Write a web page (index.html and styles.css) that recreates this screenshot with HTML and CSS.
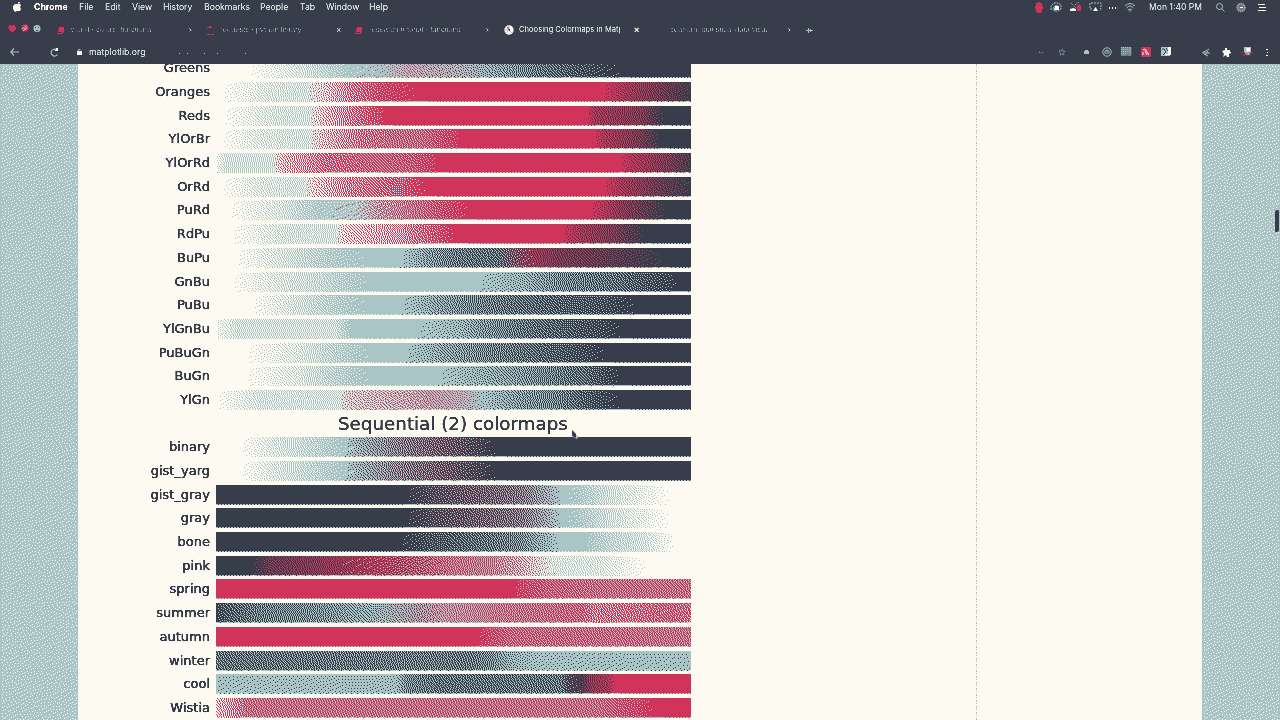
FILE: index.html
```html
<!DOCTYPE html>
<html lang="en">
<head>
<meta charset="utf-8">
<title>Choosing Colormaps in Matplotlib</title>
<link rel="stylesheet" href="styles.css">
</head>
<body>
<svg class="defs" width="0" height="0">
  <filter id="crisp"><feComponentTransfer><feFuncA type="linear" slope="2.4" intercept="-0.5"/></feComponentTransfer></filter>
  <filter id="faint"><feComponentTransfer><feFuncA type="linear" slope="6" intercept="-3.5"/></feComponentTransfer></filter>
</svg>
<header class="chrome">
  <div class="menubar">
    <svg class="apple" width="9" height="10" viewBox="0 0 9 10"><path fill="#fdfaf1" d="M5 0h2v1L5 2zM2 2h5l1 1-1 2 1 2-1 2H5L4 9 2 10 0 7V4z"/></svg>
    <nav class="menus"><b>Chrome</b><span>File</span><span>Edit</span><span>View</span><span>History</span><span>Bookmarks</span><span>People</span><span>Tab</span><span>Window</span><span>Help</span></nav>
    <div class="tray">
      <svg width="8" height="11" viewBox="0 0 8 11"><path fill="#d1345b" d="M1 1h2V0h2v1h2v3h1v3H7v2l-1 2H2L1 9V7H0V4h1z"/></svg>
      <svg width="13" height="10" viewBox="0 0 13 10" fill="none" stroke="#a9c5c5"><path d="M1 8V4l3-3h4l3 2v4L8 9H4L3 6l3-3 3 2" stroke-dasharray="2 .7"/><path fill="#fdfaf1" stroke="none" d="M5 4h4v4H4z"/></svg>
      <svg width="12" height="10" viewBox="0 0 12 10"><path stroke="#a9c5c5" stroke-dasharray="1 1" fill="none" d="M1 1l5 5M5 3l4-3"/><path fill="#fdfaf1" d="M0 7l3-1 3 1v2H0z"/><path fill="#d1345b" d="M7 4l2-2 2 2v5H7z"/></svg>
      <svg width="13" height="10" viewBox="0 0 13 10"><path stroke="#a9c5c5" fill="none" stroke-dasharray="2 1" d="M3 7H1V1h11v6h-2"/><path fill="#fdfaf1" d="M6.500 5L9 9H4z"/></svg>
      <svg width="8" height="10" viewBox="0 0 8 10"><path fill="#fdfaf1" d="M0 5h1v2H0zM3 5h1v2H3zM6 5h1v2H6z"/></svg>
      <svg width="12" height="10" viewBox="0 0 12 10" fill="none" stroke="#a9c5c5"><path d="M1 4Q6-1 11 4M2.500 6Q6 2 9.500 6M4 8q2-2 4 0"/><path d="M5.500 8.500h1v1h-1z" fill="#fdfaf1" stroke="none"/></svg>
      <span class="clock">Mon 1:40 PM</span>
      <svg width="9" height="9" viewBox="0 0 9 9" fill="none" stroke="#a9c5c5"><circle cx="3.500" cy="3.500" r="3"/><path d="M6 6l2.500 2.500"/></svg>
      <svg width="10" height="11" viewBox="0 0 10 11"><circle cx="5" cy="5.500" r="4" fill="#6f8087" stroke="#a9c5c5" stroke-width="1.500" stroke-dasharray="1 1"/><path stroke="#d1345b" d="M3 3.500h4"/><path stroke="#fdfaf1" d="M4 5.500h3"/></svg>
      <svg width="9" height="8" viewBox="0 0 9 8"><path stroke="#fdfaf1" d="M1 1.500h7M2 4.500h7M1 7.500h8"/></svg>
    </div>
  </div>
  <div class="tabs">
    <div class="lights">
      <svg width="9" height="9" viewBox="0 0 9 9"><path fill="#d1345b" d="M1 1h2l1 1 1-1h2v2h1v2L5 8H4L1 6V4H0V3h1z"/></svg>
      <svg width="8" height="9" viewBox="0 0 8 9"><circle cx="4" cy="4" r="3.500" fill="#d1345b"/><path stroke="#fdfaf1" stroke-dasharray="1 1" d="M1 5l5-4M2 7l5-4M3 4l2 2"/></svg>
      <svg width="8" height="9" viewBox="0 0 8 9"><circle cx="4" cy="4.500" r="3.500" fill="#a9c5c5"/><path fill="#373d4b" d="M2 3h1v1H2zM5 3h1v1H5zM3 6h2v1H3z"/></svg>
    </div>
    <div class="tab t1"><svg width="9" height="9" viewBox="0 0 9 9"><path fill="#d1345b" d="M2 1h5v5L5 8H0l1-2z"/><path stroke="#373d4b" d="M1 6.500h4"/></svg><span class="dim">world · colors, functional</span><i>×</i></div>
    <div class="tab t2"><svg width="8" height="9" viewBox="0 0 8 9"><path stroke="#d1345b" fill="none" d="M0 1.500h5M2 .5h2M0 8.500h3M4 8.500h3"/></svg><span class="dim">requests · python library</span><i class="seen">×</i></div>
    <div class="tab t3"><svg width="9" height="9" viewBox="0 0 9 9"><path fill="#d1345b" d="M2 1h5v4L6 8H0l1-3z"/><path stroke="#373d4b" d="M1 6.500h4"/></svg><span class="dim">research tutorial · functions</span><i>×</i></div>
    <div class="tab t4"><svg width="10" height="10" viewBox="0 0 10 10"><circle cx="5" cy="5" r="4.700" fill="#fdfaf1"/><path fill="#d1345b" d="M3 2h2v3H4z"/><path stroke="#a9c5c5" d="M1 5h3M5 1v3M6 6l2 2M2 8l3-3"/><path fill="#373d4b" d="M5 4h1v2H5z"/></svg><span class="active">Choosing Colormaps in Matp</span><i class="hot">×</i></div>
    <div class="tab t5"><span class="dim">seaborn: statistical data visua</span><i>×</i></div>
    <svg class="plus" width="7" height="7" viewBox="0 0 7 7"><path stroke="#a9c5c5" d="M0 3.500h2M3 3.500h1M5 3.500h2M2.500 1v5M4.500 2v3"/></svg>
  </div>
  <div class="toolbar">
    <svg class="back" width="9" height="8" viewBox="0 0 9 8"><path stroke="#a9c5c5" stroke-width="1.100" fill="none" d="M9 4H1M4 .5L.7 4 4 7.500"/></svg>
    <svg class="reload" width="9" height="9" viewBox="0 0 9 9"><path stroke="#a9c5c5" fill="none" stroke-width="1.200" d="M7.500 6.500A3.500 3.500 0 1 1 7 2"/><path fill="#fdfaf1" d="M5 3V2h1V0h2v3z"/></svg>
    <svg class="lock" width="5" height="6" viewBox="0 0 5 6"><path fill="#fdfaf1" d="M0 2h5v4H0z"/><path stroke="#a9c5c5" d="M1.500 2V.5h2"/></svg>
    <span class="url">matplotlib.org</span>
    <svg class="dots" width="68" height="3" viewBox="0 0 68 3"><path fill="#a9c5c5" d="M0 2h1v1H0zM8 2h1v1H8zM25 2h1v1h-1zM38 2h1v1h-1zM66 2h1v1h-1z"/></svg>
    <div class="ext">
      <svg width="7" height="8" viewBox="0 0 7 8"><path stroke="#a9c5c5" stroke-dasharray="1 1.500" fill="none" d="M1 4l2 1 3-1"/></svg>
      <svg class="e1" width="8" height="8" viewBox="0 0 8 8"><path stroke="#a9c5c5" fill="none" stroke-dasharray="1 1" d="M4 1l1 2h2L5.500 5 6 7 4 6 2 7l.5-2L1 3h2z"/></svg>
      <svg class="e2" width="5" height="6" viewBox="0 0 5 6"><path fill="#a9c5c5" d="M0 2h1V1h3v1h1v3H0z"/></svg>
      <svg class="e3" width="10" height="10" viewBox="0 0 10 10" fill="none" stroke="#a9c5c5"><circle cx="5" cy="5" r="4.200"/><path d="M3 7V4l2-1 2 1v3M5 4v3"/></svg>
      <svg class="e4" width="11" height="10" viewBox="0 0 11 10"><path fill="#718a90" d="M0 0h10v9H0z"/><path stroke="#a9c5c5" stroke-dasharray="1 1" fill="none" d="M0 .5h10v8M0 2.500h9M0 4.500h9M0 6.500h5"/><path fill="#d1345b" d="M5 8h2v1H5z"/></svg>
      <svg class="e5" width="10" height="10" viewBox="0 0 10 10"><path fill="#d1345b" d="M0 0h10v10H0z"/><path stroke="#fdfaf1" fill="none" d="M2 3l2-1 4 6M4 4l2 4M2 5v3"/></svg>
      <svg class="e6" width="11" height="10" viewBox="0 0 11 10"><path fill="#a9c5c5" d="M0 0h9v9H0z"/><path fill="#fdfaf1" d="M7 0h3v8H4V7h3z"/><path stroke="#373d4b" fill="none" d="M1 2h2l2 3-3 3M5 1l2 3"/></svg>
      <svg class="e7" width="9" height="9" viewBox="0 0 9 9"><path stroke="#a9c5c5" fill="none" d="M1 4l3-1 3-2M0 5h8M3 7l3-4M2 6l4 2"/></svg>
      <svg class="e8" width="10" height="9" viewBox="0 0 10 9"><path fill="#fdfaf1" d="M3 2V0h2v2h3v2h1v1L7 6v3H5L4 7 1 9l1-3-2-3z"/></svg>
      <svg class="e9" width="13" height="10" viewBox="0 0 13 10"><path fill="#a9c5c5" d="M3 0h7v5l-2 3H5L3 5z"/><path fill="#fdfaf1" d="M5 1h4v4H6z"/><path stroke="#d1345b" fill="none" stroke-dasharray="2 1" d="M0 6l3-1 2 2 3-2 5 1M2 8h8"/></svg>
      <svg class="e10" width="3" height="9" viewBox="0 0 3 9"><path fill="#fdfaf1" d="M0 1h2v1H0zM1 4h1v1H1zM0 7h2v1H0z"/></svg>
    </div>
  </div>
</header>
<main class="page">
  <canvas class="side" data-speckle width="78" height="656"></canvas>
  <article class="sheet">
    <section class="chart" id="chart"></section>
    <div class="divider"></div>
  </article>
  <div class="side right">
    <canvas data-speckle width="78" height="656"></canvas>
    <span class="thumb"></span>
  </div>
</main>
<svg class="cursor" width="6" height="9" viewBox="0 0 6 9"><path fill="#a9c5c5" d="M1 0l5 7-1 2-4-2z"/><path fill="#373d4b" d="M0 0l4 4v4L0 6z"/></svg>
<script src="chart.js"></script>
</body>
</html>
```
FILE: styles.css
```css
body { margin: 0; width: 1280px; height: 720px; overflow: hidden; background: #fdfaf1; font-family: "Liberation Sans", Arial, sans-serif; color: #373d4b; }
.defs { position: absolute; }
canvas { display: block; image-rendering: pixelated; }
svg { display: block; flex: none; }
.chrome { height: 64px; background: #373d4b; color: #a9c5c5; }
.menubar { display: flex; align-items: center; height: 14px; padding: 0 14px 0 13px; }
.apple { margin-right: 12px; }
.menus { display: flex; font-family: Inter, "Liberation Sans", sans-serif; font-size: 8.7px; line-height: 14px; filter: url(#crisp); color: #c9dad7; }
.menus b { width: 45px; color: #fdfaf1; }
.menus span:nth-of-type(1) { width: 26px; }
.menus span:nth-of-type(2) { width: 27px; }
.menus span:nth-of-type(3) { width: 31px; }
.menus span:nth-of-type(4) { width: 41px; }
.menus span:nth-of-type(5) { width: 56px; }
.menus span:nth-of-type(6) { width: 40px; }
.menus span:nth-of-type(7) { width: 26px; }
.menus span:nth-of-type(8) { width: 43px; }
.tray { margin-left: auto; display: flex; align-items: center; gap: 7px; }
.clock { font-family: Inter, "Liberation Sans", sans-serif; font-size: 8.6px; line-height: 14px; width: 52px; margin: 0 8px 0 6px; white-space: nowrap; color: #c9dad7; filter: url(#crisp); }
.tray svg:nth-last-of-type(2) { margin: 0 4px; }
.tabs { display: flex; align-items: center; height: 32px; padding-left: 8px; }
.lights { display: flex; gap: 4px; width: 49px; margin-top: -4px; }
.tab { display: flex; align-items: center; white-space: nowrap; font-size: 7.6px; line-height: 12px; }
.tab span { margin-left: 5px; overflow: hidden; }
.tab i { margin-left: auto; margin-right: 13px; width: 6px; font-style: normal; font-size: 9px; filter: url(#faint); }
.tab i.hot { color: #fdfaf1; filter: none; font-weight: bold; margin-right: 9px; }
.tab i.seen { filter: url(#crisp); }
.t1 { width: 150px; }
.t2 { width: 148px; }
.t3 { width: 149px; }
.t4 { width: 145px; }
.t5 { width: 157px; }
.t5 .dim { margin-left: 21px; }
.dim { width: 98px; font-size: 7.6px; filter: url(#faint); }
.active { font-family: Inter, "Liberation Sans", sans-serif; width: 101px; color: #c9dad7; filter: url(#crisp); }
.toolbar { display: flex; align-items: center; height: 12px; padding-left: 10px; }
.reload { margin-left: 31px; }
.lock { margin-left: 18px; }
.url { margin-left: 7px; width: 90px; font-family: Inter, "Liberation Sans", sans-serif; font-size: 8.7px; line-height: 12px; color: #c9dad7; filter: url(#crisp); }
.ext { margin-left: auto; display: flex; align-items: center; width: 242px; }
.e1 { margin-left: 13px; }
.e2 { margin-left: 18px; }
.e3 { margin-left: 13px; }
.e4 { margin-left: 9px; }
.e5 { margin-left: 9px; }
.e6 { margin-left: 10px; }
.e7 { margin-left: 30px; }
.e8 { margin-left: 11px; }
.e9 { margin-left: 9px; }
.e10 { margin-left: 12px; }
.page { display: flex; height: 656px; overflow: hidden; }
.side { flex: none; width: 78px; height: 656px; }
.right { position: relative; }
.thumb { position: absolute; right: 1px; top: 146px; width: 4px; height: 22px; background: #373d4b; border-radius: 2px 1px; }
.sheet { width: 1124px; display: flex; }
.chart { width: 898px; margin-top: -5.700px; }
.row { display: flex; align-items: flex-start; height: 23.7px; }
.label { width: 132px; margin: 1px 6px 0 0; text-align: right; white-space: nowrap; font: 13px/18px "DejaVu Sans", sans-serif; -webkit-text-stroke: .3px #373d4b; filter: url(#crisp); }
.heading { height: 23.7px; padding-left: 260px; font: 18.3px/20px "DejaVu Sans", sans-serif; white-space: nowrap; -webkit-text-stroke: .2px #373d4b; filter: url(#crisp); }
.divider { width: 1px; height: 656px; background: repeating-linear-gradient(#a9c5c5 0 2px, #fdfaf1 2px 3px, #a9c5c5 3px 4px, #fdfaf1 4px 6px); }
.cursor { position: absolute; left: 572px; top: 430px; }
```
FILE: chart.js
```js
// Ink order: cream, teal, red, dark. Each stop is [x, cream, teal, red, dark] on a 216..691 axis.
const INKS = [[253, 250, 241], [169, 197, 197], [209, 52, 91], [55, 61, 75]];
const GRAY = [[216,0,0,0,1],[402,0,0,0,1],[430,0,.15,.1,.75],[480,0,.27,.18,.55],[520,0,.4,.15,.45],[545,0,.7,.1,.2],[562,0,1,0,0],[578,.1,.9,0,0],[600,.4,.6,0,0],[635,.7,.3,0,0],[668,.97,.03,0,0],[671,1,0,0,0]];
const YARG = [[216,1,0,0,0],[238,1,0,0,0],[270,.65,.35,0,0],[310,.35,.65,0,0],[342,.05,.95,0,0],[360,0,.75,.05,.2],[400,0,.45,.15,.4],[440,0,.25,.2,.55],[470,0,.15,.1,.75],[497,0,0,0,1]];
const MAPS = [
  ["Greens", [[216,1,0,0,0],[245,1,0,0,0],[300,.6,.4,0,0],[350,.05,.95,0,0],[380,0,.93,.07,0],[410,0,.7,.3,0],[460,0,.75,.15,.1],[485,0,.75,0,.25],[540,0,.4,0,.6],[600,0,.1,0,.9],[622,0,0,0,1]]],
  ["Oranges", [[216,1,0,0,0],[218,1,0,0,0],[270,.6,.4,0,0],[305,.5,.5,0,0],[325,.6,.15,.25,0],[350,.4,0,.6,0],[380,0,.2,.8,0],[420,0,0,1,0],[600,0,0,1,0],[620,0,0,.75,.25],[650,0,0,.45,.55],[690,0,0,.08,.92]]],
  ["Reds", [[216,1,0,0,0],[220,1,0,0,0],[275,.55,.45,0,0],[308,.5,.5,0,0],[325,.65,0,.35,0],[350,.4,0,.6,0],[382,.05,.05,.9,0],[384,0,0,1,0],[585,0,0,1,0],[595,0,0,.65,.35],[640,0,0,.45,.55],[665,0,0,0,1]]],
  ["YlOrBr", [[216,1,0,0,0],[218,1,0,0,0],[265,.6,.4,0,0],[308,.5,.5,0,0],[320,.55,.2,.25,0],[360,.2,.2,.6,0],[390,0,.4,.6,0],[420,0,.4,.6,0],[457,0,.1,.9,0],[459,0,0,1,0],[592,0,0,1,0],[605,0,0,.7,.3],[640,0,0,.4,.6],[660,0,0,0,1]]],
  ["YlOrRd", [[216,.85,.15,0,0],[226,.5,.5,0,0],[272,.5,.5,0,0],[282,.63,.02,.35,0],[330,.25,.05,.7,0],[365,0,.35,.65,0],[410,0,.3,.7,0],[430,0,.15,.85,0],[438,0,0,1,0],[618,0,0,1,0],[632,0,0,.75,.25],[660,0,0,.5,.5],[690,0,0,.12,.88]]],
  ["OrRd", [[216,1,0,0,0],[218,1,0,0,0],[265,.6,.4,0,0],[303,.5,.5,0,0],[318,.68,.02,.3,0],[350,.4,0,.6,0],[400,.25,0,.75,0],[427,0,0,1,0],[602,0,0,1,0],[620,0,0,.7,.3],[650,0,0,.4,.6],[688,0,0,.05,.95]]],
  ["PuRd", [[216,1,0,0,0],[225,1,0,0,0],[280,.6,.4,0,0],[320,.1,.9,0,0],[355,.1,.85,.05,0],[380,.1,.5,.4,0],[420,0,.4,.6,0],[466,0,.05,.95,0],[469,0,0,1,0],[588,0,0,1,0],[615,0,0,.6,.4],[640,0,0,.3,.7],[667,0,0,0,1]]],
  ["RdPu", [[216,1,0,0,0],[228,1,0,0,0],[285,.55,.45,0,0],[335,.5,.5,0,0],[345,.7,0,.3,0],[400,.5,0,.5,0],[430,.15,.15,.7,0],[457,0,0,1,0],[560,0,0,1,0],[580,0,0,.65,.35],[615,0,0,.4,.6],[646,0,0,0,1]]],
  ["BuPu", [[216,1,0,0,0],[233,1,0,0,0],[290,.5,.5,0,0],[335,.15,.85,0,0],[370,0,1,0,0],[398,0,1,0,0],[430,0,.6,0,.4],[460,0,.4,0,.6],[500,0,.35,0,.65],[515,0,.2,.3,.5],[535,0,0,.6,.4],[560,0,0,.4,.6],[600,0,0,.3,.7],[655,0,0,.05,.95],[665,0,0,0,1]]],
  ["GnBu", [[216,1,0,0,0],[228,1,0,0,0],[280,.6,.4,0,0],[320,.4,.6,0,0],[370,0,1,0,0],[475,0,1,0,0],[490,0,.9,0,.1],[525,0,.75,0,.25],[560,0,.5,0,.5],[620,0,.35,0,.65],[670,0,.1,0,.9],[678,0,0,0,1]]],
  ["PuBu", [[216,1,0,0,0],[249,1,0,0,0],[300,.5,.5,0,0],[350,.1,.9,0,0],[370,0,1,0,0],[398,0,1,0,0],[440,0,.65,0,.35],[470,0,.5,0,.5],[520,0,.35,0,.65],[600,0,.2,0,.8],[640,0,0,0,1]]],
  ["YlGnBu", [[216,.85,.15,0,0],[238,.5,.5,0,0],[335,.5,.5,0,0],[352,0,1,0,0],[412,0,1,0,0],[460,0,.8,0,.2],[480,0,.6,0,.4],[520,0,.4,0,.6],[600,0,.15,0,.85],[624,0,0,0,1]]],
  ["PuBuGn", [[216,1,0,0,0],[242,1,0,0,0],[300,.6,.4,0,0],[350,.15,.85,0,0],[372,0,1,0,0],[402,0,1,0,0],[440,0,.7,0,.3],[480,0,.5,0,.5],[530,0,.35,0,.65],[590,0,.12,0,.88],[607,0,0,0,1]]],
  ["BuGn", [[216,1,0,0,0],[242,1,0,0,0],[300,.6,.4,0,0],[350,.15,.85,0,0],[372,0,1,0,0],[435,0,1,0,0],[460,0,.85,0,.15],[510,0,.65,0,.35],[540,0,.5,0,.5],[590,0,.3,0,.7],[622,0,0,0,1]]],
  ["YlGn", [[216,.97,.03,0,0],[260,.55,.45,0,0],[337,.5,.5,0,0],[350,.4,.4,.2,0],[400,.2,.5,.3,0],[430,0,.65,.35,0],[460,0,.75,.25,0],[482,0,.9,.02,.08],[520,0,.6,0,.4],[560,0,.45,0,.55],[600,0,.15,0,.85],[622,0,0,0,1]]],
  ["Sequential (2) colormaps", null],
  ["binary", YARG], ["gist_yarg", YARG], ["gist_gray", GRAY], ["gray", GRAY],
  ["bone", [[216,0,0,0,1],[395,0,0,0,1],[430,0,.2,0,.8],[520,0,.5,0,.5],[550,0,.85,0,.15],[560,0,1,0,0],[583,0,1,0,0],[610,.35,.65,0,0],[640,.5,.5,0,0],[672,.95,.05,0,0],[675,1,0,0,0]]],
  ["pink", [[216,0,0,0,1],[250,0,0,0,1],[270,0,0,.3,.7],[330,0,0,.55,.45],[380,0,.1,.7,.2],[400,0,.2,.6,.2],[450,0,.4,.6,0],[490,0,.5,.5,0],[520,.35,.3,.35,0],[552,.55,.44,.01,0],[600,.6,.4,0,0],[630,.87,.13,0,0],[650,1,0,0,0]]],
  ["spring", [[216,0,0,1,0],[512,0,0,1,0],[520,0,.15,.85,0],[545,0,.32,.68,0],[600,0,.4,.6,0],[691,0,.4,.6,0]]],
  ["summer", [[216,0,.1,0,.9],[225,0,.25,0,.75],[260,0,.45,0,.55],[320,0,.55,0,.45],[360,0,.7,0,.3],[385,0,.75,.05,.2],[420,0,.6,.25,.15],[445,0,.6,.4,0],[500,0,.45,.55,0],[580,0,.35,.65,0],[595,.35,.05,.6,0],[640,.2,.15,.65,0],[670,0,.37,.63,0],[691,.2,.15,.65,0]]],
  ["autumn", [[216,0,0,1,0],[475,0,0,1,0],[490,0,.2,.8,0],[510,0,.35,.65,0],[691,0,.42,.58,0]]],
  ["winter", [[216,0,.38,0,.62],[400,0,.43,0,.57],[470,0,.4,0,.6],[490,0,.5,0,.5],[510,0,.75,0,.25],[540,0,.9,0,.1],[691,0,.93,0,.07]]],
  ["cool", [[216,0,.92,0,.08],[395,0,.88,0,.12],[407,0,.5,0,.5],[440,0,.36,0,.64],[560,0,.4,0,.6],[570,0,.1,.1,.8],[582,0,0,.15,.85],[590,0,0,.5,.5],[608,0,0,.7,.3],[615,0,0,1,0],[691,0,0,1,0]]],
  ["Wistia", [[216,.65,0,.35,0],[238,.4,0,.6,0],[245,0,.4,.6,0],[600,0,.4,.6,0],[640,0,.15,.85,0],[655,0,0,1,0],[691,0,0,1,0]]]
];

function mixAt(stops, x) {
  let i = 0;
  while (i < stops.length - 1 && stops[i + 1][0] <= x) i++;
  const a = stops[i], b = stops[i + 1] || a;
  const t = a === b ? 0 : (x - a[0]) / (b[0] - a[0]);
  return [1, 2, 3, 4].map(k => a[k] + (b[k] - a[k]) * t);
}

// Error diffusion over ink weights.
function dither(canvas, weightsAt) {
  const w = canvas.width, h = canvas.height;
  const ctx = canvas.getContext("2d"), img = ctx.createImageData(w, h);
  const err = Array.from({ length: h + 1 }, () => new Float32Array((w + 2) * 4));
  for (let y = 0; y < h; y++) for (let x = 0; x < w; x++) {
    const base = weightsAt(x, y), p = (x + 1) * 4;
    let best = 0, top = -9;
    const v = base.map((n, k) => n + err[y][p + k]);
    v.forEach((n, k) => { if (base[k] > 0.004 && n > top) { top = n; best = k; } });
    v.forEach((n, k) => {
      const e = n - (k === best ? 1 : 0);
      err[y][p + 4 + k] += e / 2;
      err[y + 1][p - 4 + k] += e / 4;
      err[y + 1][p + k] += e / 4;
    });
    img.data.set([...INKS[best], 255], (y * w + x) * 4);
  }
  ctx.putImageData(img, 0, 0);
}

const chart = document.getElementById("chart");
for (const [name, stops] of MAPS) {
  const row = document.createElement("div");
  if (!stops) {
    row.className = "heading";
    row.textContent = name;
  } else {
    row.className = "row";
    const label = document.createElement("span");
    label.className = "label";
    label.textContent = name;
    const bar = document.createElement("canvas");
    bar.width = 475;
    bar.height = 20;
    row.append(label, bar);
    dither(bar, (x, y) => {
      const m = mixAt(stops, x + 216);
      return y === 19 && m[0] < .3 ? [.15, .6, m[2] * .25, m[3] * .25] : m;
    });
  }
  chart.append(row);
}
document.querySelectorAll("[data-speckle]").forEach(c => {
  let seed = 7;
  dither(c, () => {
    seed = (seed * 16807) % 2147483647;
    const cream = .11 + (seed / 2147483647 - .5) * .1;
    return [cream, 1 - cream, 0, 0];
  });
});
```
